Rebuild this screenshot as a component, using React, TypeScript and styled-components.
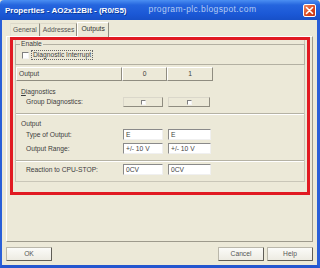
import { createGlobalStyle, styled } from "styled-components"

const Global = createGlobalStyle`
  html, body { margin: 0; padding: 0; background: #ece9d8; }
  body {
    font-family: "Liberation Sans", Arial, sans-serif;
    font-size: 6.7px;
    color: #3c3c3c;
  }
  * { box-sizing: border-box; }
`

const Window = styled.div`
  width: 320px;
  height: 268px;
  display: flex;
  flex-direction: column;
  overflow: hidden;
`

const TitleBar = styled.div`
  height: 20px;
  display: flex;
  align-items: center;
  padding: 0 4px 0 5px;
  background: linear-gradient(#4b8ff2 0%, #2565de 25%, #1b58d6 70%, #1750c8 100%);
  border-radius: 4px 4px 0 0;
`

const Title = styled.span`
  font-weight: bold;
  font-size: 8px;
  color: #fff;
  text-shadow: 1px 1px 0 #0d3a9a;
`

const Watermark = styled.span`
  align-self: flex-start;
  margin: 4px 0 0 22px;
  font-size: 8.5px;
  letter-spacing: 0.4px;
  color: #b4cbf2;
`

const CloseBtn = styled.div`
  margin-left: auto;
  width: 13px;
  height: 13px;
  border: 1px solid #fff;
  border-radius: 2px;
  background: linear-gradient(135deg, #f08a62, #d8461f 60%, #c2381a);
  display: flex;
  align-items: center;
  justify-content: center;
`

const Frame = styled.div`
  flex: 1;
  display: flex;
  flex-direction: column;
  background: #ece9d8;
  border-left: 2px solid #2a5fd8;
  border-right: 3px solid #2a5fd8;
  border-bottom: 3px solid #2456cf;
`

const TabRow = styled.div`
  height: 16px;
  display: flex;
  align-items: flex-end;
  padding: 0 0 0 8px;
  position: relative;
  z-index: 1;
`

const Tab = styled.div<{ $active?: boolean }>`
  height: ${p => (p.$active ? 15 : 13)}px;
  margin-bottom: ${p => (p.$active ? -1 : 0)}px;
  padding: 0 ${p => (p.$active ? 3 : 2)}px;
  line-height: ${p => (p.$active ? 11 : 12)}px;
  background: #ece9d8;
  border-top: 1px solid ${p => (p.$active ? "#fff" : "#dcd8c9")};
  border-left: 1px solid ${p => (p.$active ? "#fff" : "#e4e1d3")};
  border-right: 1px solid #8f8c80;
  color: ${p => (p.$active ? "#333" : "#555")};
`

const Panel = styled.div`
  height: 206px;
  margin: 0 4px;
  padding: 0 2px 0 3px;
  border: 1px solid;
  border-color: #fff #9d9a8c #9d9a8c #fff;
`

const RedBox = styled.div`
  border: 3px solid #e11a22;
  padding: 0 2px 10px;
`

const Pane = styled.div`
  display: flex;
  flex-direction: column;
  padding-bottom: 6px;
  border: 1px solid #c9c6b8;
  border-top: none;
`

const Group = styled.fieldset`
  margin: 0 -1px;
  padding: 2px 4px 4px;
  border: 1px solid #b3b0a2;
  min-width: 0;
`

const Legend = styled.legend`
  padding: 0 1px;
  line-height: 8px;
  font-size: 6.7px;
`

const CheckRow = styled.div`
  height: 10px;
  display: flex;
  align-items: center;
  padding-left: 2px;
`

const Box = styled.span<{ $size: number }>`
  display: inline-block;
  width: ${p => p.$size}px;
  height: ${p => p.$size}px;
  background: #fff;
  border: 1px solid;
  border-color: #808080 #f4f4f4 #f4f4f4 #808080;
`

const FocusLabel = styled.span`
  margin-left: 2px;
  padding: 0 1px;
  height: 10px;
  line-height: 8px;
  border: 1px dotted #666;
`

const Row = styled.div<{ $mt?: number; $h?: number }>`
  display: grid;
  grid-template-columns: 106px 45px 46px 1fr;
  align-items: center;
  height: ${p => p.$h ?? 11}px;
  margin-top: ${p => p.$mt ?? 0}px;
`

const HeaderCell = styled.div<{ $center?: boolean }>`
  height: 14px;
  line-height: 12px;
  padding-left: ${p => (p.$center ? 0 : 2)}px;
  text-align: ${p => (p.$center ? "center" : "left")};
  border: 1px solid;
  border-color: #fff #8f8c80 #8f8c80 #fff;
  background: #ece9d8;
`

const Label = styled.div<{ $indent: number }>`
  padding-left: ${p => p.$indent}px;
  line-height: 10px;
  white-space: nowrap;
`

const CheckCell = styled.div<{ $w: number }>`
  width: ${p => p.$w}px;
  height: 10px;
  margin-left: 1px;
  display: flex;
  align-items: center;
  justify-content: center;
  border: 1px solid;
  border-color: #dad7ca #8f8c80 #8f8c80 #dad7ca;
`

const Field = styled.div<{ $w: number }>`
  width: ${p => p.$w}px;
  height: 11px;
  margin-left: 1px;
  padding-left: 2px;
  line-height: 9px;
  background: #fff;
  border: 1px solid;
  border-color: #8a8a8a #f0f0f0 #f0f0f0 #8a8a8a;
  color: #444;
`

const Separator = styled.div<{ $mt: number }>`
  margin-top: ${p => p.$mt}px;
  height: 2px;
  border-top: 1px solid #b5b2a4;
  border-bottom: 1px solid #fff;
`

const ButtonRow = styled.div`
  margin-top: 5px;
  height: 14px;
  padding: 0 4px;
  display: flex;
  justify-content: space-between;
`

const ButtonGroup = styled.div`
  display: flex;
  gap: 3px;
`

const Button = styled.div`
  width: 46px;
  height: 14px;
  line-height: 12px;
  text-align: center;
  color: #555;
  border: 1px solid;
  border-color: #bab7aa #5f5d56 #5f5d56 #bab7aa;
  border-radius: 1px;
  background: linear-gradient(#fbfbf8, #edebe2);
`

const outputRows = [
  { label: "Type of Output:", values: ["E", "E"], mt: 0 },
  { label: "Output Range:", values: ["+/- 10 V", "+/- 10 V"], mt: 3 },
]

export default function App() {
  return (
    <>
      <Global />
      <Window>
        <TitleBar>
          <Title>Properties - AO2x12Bit - (R0/S5)</Title>
          <Watermark>program-plc.blogspot.com</Watermark>
          <CloseBtn>
            <svg width="9" height="9" viewBox="0 0 9 9">
              <path d="M1.5 1.5 L7.5 7.5 M7.5 1.5 L1.5 7.5" stroke="#fff" strokeWidth="1.6" strokeLinecap="round" />
            </svg>
          </CloseBtn>
        </TitleBar>
        <Frame>
          <TabRow>
            <Tab>General</Tab>
            <Tab>Addresses</Tab>
            <Tab $active>Outputs</Tab>
          </TabRow>
          <Panel>
            <RedBox>
              <Pane>
                <Group>
                  <Legend>Enable</Legend>
                  <CheckRow>
                    <Box $size={7} />
                    <FocusLabel>Diagnostic Interrupt</FocusLabel>
                  </CheckRow>
                </Group>

                <Row $mt={2} $h={14}>
                  <HeaderCell>Output</HeaderCell>
                  <HeaderCell $center>0</HeaderCell>
                  <HeaderCell $center>1</HeaderCell>
                </Row>

                <Row $mt={6} $h={10}>
                  <Label $indent={5}><u>D</u>iagnostics</Label>
                </Row>
                <Row $h={10}>
                  <Label $indent={10}>Group Diagnostics:</Label>
                  <CheckCell $w={40}><Box $size={5} /></CheckCell>
                  <CheckCell $w={42}><Box $size={5} /></CheckCell>
                </Row>

                <Separator $mt={6} />

                <Row $mt={4} $h={10}>
                  <Label $indent={5}>Output</Label>
                </Row>
                {outputRows.map(r => (
                  <Row key={r.label} $mt={r.mt}>
                    <Label $indent={10}>{r.label}</Label>
                    <Field $w={40}>{r.values[0]}</Field>
                    <Field $w={43}>{r.values[1]}</Field>
                  </Row>
                ))}

                <Separator $mt={6} />

                <Row $mt={2}>
                  <Label $indent={10}>Reaction to CPU-STOP:</Label>
                  <Field $w={40}>0CV</Field>
                  <Field $w={43}>0CV</Field>
                </Row>
              </Pane>
            </RedBox>
          </Panel>
          <ButtonRow>
            <Button>OK</Button>
            <ButtonGroup>
              <Button>Cancel</Button>
              <Button>Help</Button>
            </ButtonGroup>
          </ButtonRow>
        </Frame>
      </Window>
    </>
  )
}
